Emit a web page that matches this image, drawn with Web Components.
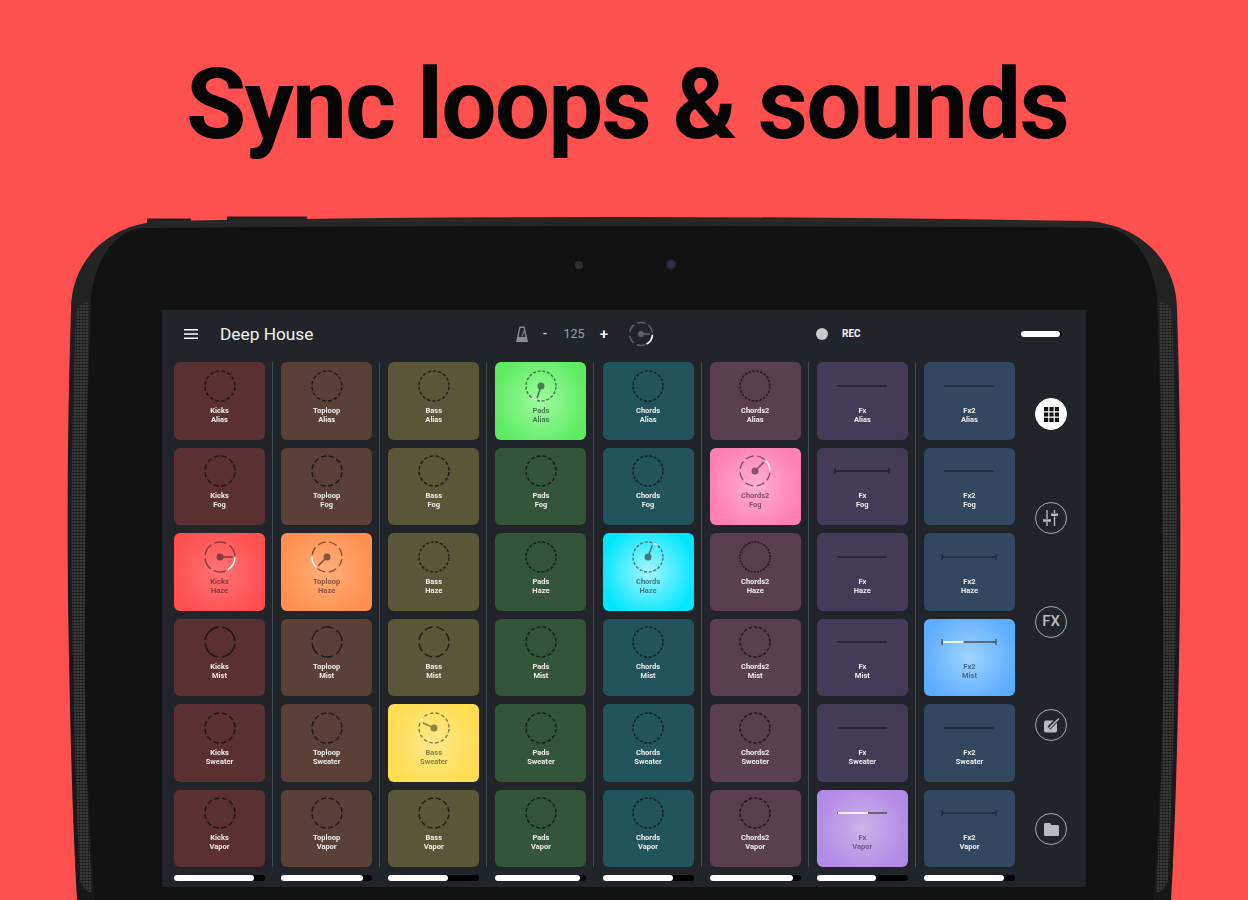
<!DOCTYPE html>
<html>
<head>
<meta charset="utf-8">
<title>Sync loops & sounds</title>
<style>
  html, body { margin: 0; padding: 0; background: #ff5050; }
  body { width: 1248px; height: 900px; overflow: hidden; font-family: Roboto, "Liberation Sans", sans-serif; }
</style>
</head>
<body>
<promo-page>
  <promo-headline>Sync loops &amp; sounds</promo-headline>
  <tablet-frame>
    <deck-screen></deck-screen>
  </tablet-frame>
</promo-page>

<script>
// data for the 8 columns, top to bottom
const ROWS = ['Alias', 'Fog', 'Haze', 'Mist', 'Sweater', 'Vapor']
const COLUMNS = [
  { name: 'Kicks', bg: '#5a3032', bar: 88, segs: [16, 12, 6, 4, 12, 12] },
  { name: 'Toploop', bg: '#5b4038', bar: 90, segs: [16, 12, 8, 6, 12, 12] },
  { name: 'Bass', bg: '#5a5638', bar: 66, segs: [18, 16, 20, 8, 16, 12] },
  { name: 'Pads', bg: '#33553a', bar: 93, segs: [20, 16, 20, 16, 16, 16] },
  { name: 'Chords', bg: '#22545e', bar: 77, segs: [20, 20, 20, 20, 20, 20] },
  { name: 'Chords2', bg: '#5a3f4c', bar: 91, segs: [24, 8, 30, 18, 18, 18] },
  { name: 'Fx', bg: '#443b58', bar: 65, line: true, ticks: [0, 1, 0, 0, 0, 0] },
  { name: 'Fx2', bg: '#324860', bar: 88, line: true, ticks: [0, 0, 1, 1, 0, 1] }
]
// col,row -> playing state
const ACTIVE = {
  '0,2': { from: '#ff7373', to: '#ff4f4f', ink: '#8c3a3c', angle: 90, sweep: 58 },
  '1,2': { from: '#ffb077', to: '#ff8f50', ink: '#8a5238', angle: 225, sweep: 45 },
  '2,4': { from: '#ffe98a', to: '#ffdc50', ink: '#8c8040', angle: 295, sweep: 16 },
  '3,0': { from: '#a0fba0', to: '#5eeb62', ink: '#3f7f4a', angle: 198, sweep: 18 },
  '4,2': { from: '#a6f6ff', to: '#00e6ff', ink: '#3d7a85', angle: 20, sweep: 16 },
  '5,1': { from: '#ffb0cf', to: '#ff7fb0', ink: '#8a4f68', angle: 45, sweep: 42 },
  '6,5': { from: '#cdb2eb', to: '#b189e6', ink: '#6f5a8e', fill: 62 },
  '7,3': { from: '#a0d4ff', to: '#5cacff', ink: '#466a8e', fill: 40 }
}

function arcPoint (cx, cy, r, deg) {
  const a = (deg - 90) * Math.PI / 180
  return [cx + r * Math.cos(a), cy + r * Math.sin(a)]
}

function dialSvg (size, r, segs, ink, angle, sweep, dot) {
  const c = size / 2
  const circ = 2 * Math.PI * r
  const seg = circ / segs
  // few segments = wider gaps, like the reference dials
  const gap = segs <= 8 ? 3.6 : Math.min(2.6, seg * .36)
  let dom = `<svg width="${size}" height="${size}" viewBox="0 0 ${size} ${size}" fill="none">
    <circle cx="${c}" cy="${c}" r="${r}" stroke="${ink}" stroke-width="1.4" stroke-dasharray="${seg - gap} ${gap}" stroke-dashoffset="${-gap / 2}"/>`
  if (angle !== undefined) {
    const [nx, ny] = arcPoint(c, c, r - 2.5, angle)
    const [ax, ay] = arcPoint(c, c, r, angle + 3)
    const [bx, by] = arcPoint(c, c, r, angle + sweep)
    dom += `<line x1="${c}" y1="${c}" x2="${nx}" y2="${ny}" stroke="${ink}" stroke-width="1.6"/>
      <circle cx="${c}" cy="${c}" r="${dot}" fill="${ink}"/>
      <path d="M${ax} ${ay}A${r} ${r} 0 0 1 ${bx} ${by}" stroke="#fff" stroke-width="1.6"/>`
  }
  return dom + '</svg>'
}

function lineSvg (ink, ticks, fill) {
  const x1 = ticks ? 1 : 3
  const x2 = ticks ? 55 : 53
  const white = fill !== undefined ? x1 + (x2 - x1) * fill / 100 : 0
  let dom = `<svg width="56" height="8" viewBox="0 0 56 8" fill="none">
    <line x1="${x1}" y1="4" x2="${x2}" y2="4" stroke="${ink}" stroke-width="1.4"/>`
  if (ticks) dom += `<path d="M1 1v6M55 1v6" stroke="${ink}" stroke-width="1.3"/>`
  if (white) dom += `<line x1="${x1 + 1}" y1="4" x2="${white}" y2="4" stroke="#fff" stroke-width="1.8"/>`
  return dom + '</svg>'
}

class PromoPage extends HTMLElement {
  constructor () {
    super()
    this.attachShadow({ mode: 'open' }).innerHTML = `<style>
      :host { display: flex; flex-direction: column; width: 1248px; height: 900px; background: #ff5050; overflow: hidden; }
    </style><slot></slot>`
  }
}

class PromoHeadline extends HTMLElement {
  constructor () {
    super()
    this.attachShadow({ mode: 'open' }).innerHTML = `<style>
      :host { display: block; height: 215px; flex: none; box-sizing: border-box; padding: 45px 0 0 6px; text-align: center;
        font: 700 98px/120px Roboto, "Liberation Sans", sans-serif; color: #050505; letter-spacing: -1.8px; white-space: nowrap; }
    </style><slot></slot>`
  }
}

class TabletFrame extends HTMLElement {
  constructor () {
    super()
    const grille = 'M1159 302Q1171 303 1172 315Q1178 460 1176 600Q1174 760 1168 880Q1166 890 1156 893Q1165 740 1163 600Q1162 440 1159 302Z'
    const grilleL = 'M89 302Q77 303 76 315Q70 460 72 600Q74 760 80 880Q82 890 92 893Q83 740 85 600Q86 440 89 302Z'
    this.attachShadow({ mode: 'open' }).innerHTML = `<style>
      :host { display: block; position: relative; width: 1248px; height: 685px; flex: none; box-sizing: border-box; padding: 95px 0 0 162px; }
      svg.body { position: absolute; left: 0; top: 0; }
      ::slotted(*) { position: relative; }
    </style>
    <svg class="body" width="1248" height="685" viewBox="0 215 1248 685">
      <defs>
        <pattern id="holes" width="3" height="3" patternUnits="userSpaceOnUse">
          <rect width="3" height="3" fill="#3c3c3c"/>
          <circle cx="1.5" cy="1.5" r="1.1" fill="#131313"/>
        </pattern>
        <linearGradient id="rim" x1="0" y1="0" x2="0" y2="1">
          <stop offset="0" stop-color="#262626"/><stop offset=".25" stop-color="#1c1c1c"/><stop offset="1" stop-color="#181818"/>
        </linearGradient>
      </defs>
      <rect x="147" y="218.500" width="44" height="5" rx="1" fill="#202020"/>
      <rect x="227" y="216.500" width="80" height="6" rx="1" fill="#202020"/>
      <path d="M160 221Q400 217 624 217Q848 217 1088 221C1140 225 1177 260 1177 310C1180 400 1181 500 1180 600Q1177 800 1171 900L77 900Q71 800 68 600C67 500 68 400 71 310C71 260 108 225 160 221Z" fill="url(#rim)"/>
      <path d="M624 220Q848 220 1088 223M624 220Q400 220 160 223" stroke="#2e2e2e" fill="none"/>
      <path d="M140 228Q400 226 624 226Q848 226 1108 228C1135 232 1153 262 1157 297Q1162 440 1163 600Q1165 740 1153 900L95 900Q83 740 85 600Q86 440 91 297C95 262 113 232 140 228Z" fill="#121212"/>
      <path d="${grille}" fill="url(#holes)"/>
      <path d="${grilleL}" fill="url(#holes)"/>
      <circle cx="579" cy="265" r="4" fill="#303030"/>
      <circle cx="671" cy="264.500" r="5" fill="#272930"/>
      <circle cx="671" cy="264.500" r="2.500" fill="#2b2f55"/>
    </svg>
    <slot></slot>`
  }
}

class TopBar extends HTMLElement {
  constructor () {
    super()
    this.attachShadow({ mode: 'open' }).innerHTML = `<style>
      :host { display: flex; align-items: center; height: 52px; box-sizing: border-box; padding-bottom: 5px; color: #fff; font-family: Roboto, "Liberation Sans", sans-serif; }
      .left { display: flex; align-items: center; width: 354px; box-sizing: border-box; padding-left: 22px; flex: none; }
      .left svg { margin-right: 22px; }
      .title { font-size: 17.300px; color: #f2f2f2; }
      .tempo { display: flex; align-items: center; width: 300px; flex: none; }
      .tempo span { display: block; text-align: center; }
      .minus { width: 10px; margin-left: 12px; font-size: 13px; font-weight: 500; color: #ddd; }
      .bpm { width: 30px; margin-left: 9px; font-size: 12.500px; color: #9b9fa3; }
      .plus { width: 10px; margin-left: 10px; font-size: 15px; font-weight: 500; color: #fff; }
      .tempo svg:last-child { margin-left: 19px; }
      .rec { display: flex; align-items: center; }
      .dot { width: 12px; height: 12px; border-radius: 50%; background: #c9c9c9; }
      .rec span { margin-left: 14px; font-size: 10px; font-weight: 700; color: #f4f4f4; }
      .pill { margin-left: auto; margin-right: 24px; width: 41px; height: 6px; border-radius: 3px; background: #000; }
      .pill i { display: block; width: 39px; height: 6px; border-radius: 3px; background: #fff; }
    </style>
    <div class="left">
      <svg width="14" height="10" viewBox="0 0 14 10"><path d="M0 .75h14M0 5h14M0 9.250h14" stroke="#fff" stroke-width="1.500"/></svg>
      <div class="title">Deep House</div>
    </div>
    <div class="tempo">
      <svg width="12" height="16" viewBox="0 0 12 16"><path d="M3.400 .5h5.200L12 16H0Z" fill="#8a8c8e"/><path d="M4.400 2h3.200l1.800 9H2.600Z" fill="#212529"/><path d="M6 10.500l2.500-7" stroke="#8a8c8e" stroke-width="1"/></svg>
      <span class="minus">-</span><span class="bpm">125</span><span class="plus">+</span>
      ${dialSvg(26, 11.5, 6, '#5f6265', 90, 62, 3)}
    </div>
    <div class="rec"><div class="dot"></div><span>REC</span></div>
    <div class="pill"><i></i></div>`
  }
}

class SoundPad extends HTMLElement {
  constructor () {
    super()
    this.attachShadow({ mode: 'open' })
  }
  connectedCallback () {
    const d = this.spec
    const on = d.active
    const graphic = d.line
      ? lineSvg(on ? '#4c5057' : (d.ink || '#1f2a3a'), d.ticks, on ? on.fill : undefined)
      : dialSvg(32, 15, d.segs, on ? on.ink : 'rgba(15,15,20,.8)', on ? on.angle : undefined, on ? on.sweep : 0, 3.500)
    this.shadowRoot.innerHTML = `<style>
      :host { display: block; width: 91px; height: 77.500px; flex: none; border-radius: 6px; box-sizing: border-box; padding-top: 7.500px;
        background: ${on ? `radial-gradient(circle at 50% 50%, ${on.from}, ${on.to} 80%)` : d.bg};
        font: 700 7.500px/9.200px Roboto, "Liberation Sans", sans-serif; color: ${on ? on.ink : '#f1eeee'}; text-align: center; }
      .g { height: 32px; display: flex; align-items: center; justify-content: center; }
      .t { margin-top: 4px; filter: blur(.2px); }
    </style>
    <div class="g">${graphic}</div>
    <div class="t"><slot></slot></div>`
  }
}

class DeckColumn extends HTMLElement {
  constructor () {
    super()
    this.attachShadow({ mode: 'open' })
  }
  connectedCallback () {
    const last = this.hasAttribute('last')
    const bar = this.getAttribute('bar')
    this.shadowRoot.innerHTML = `<style>
      :host { display: flex; flex-direction: column; width: 99px; margin-right: 8.150px; flex: none; }
      .stack { display: flex; flex-direction: column; gap: 8px; height: 505px; box-sizing: border-box; width: 99px; padding-right: 7px;
        ${last ? '' : 'border-right: 1px solid #3f4e54;'} }
      .track { width: 91px; height: 6px; margin-top: 7.500px; border-radius: 3px; background: #000; }
      .fill { height: 6px; width: ${bar}%; border-radius: 3px; background: #fff; }
    </style>
    <div class="stack"><slot></slot></div>
    <div class="track"><div class="fill"></div></div>`
  }
}

class RoundButton extends HTMLElement {
  constructor () {
    super()
    this.attachShadow({ mode: 'open' }).innerHTML = `<style>
      :host { display: flex; align-items: center; justify-content: center; width: 32px; height: 32px; box-sizing: border-box; border-radius: 50%;
        border: 1px solid #a8aaac; color: #b9bbbd; font: 500 15px/1 Roboto, "Liberation Sans", sans-serif; }
      :host([on]) { background: #fff; border-color: #fff; color: #111; }
    </style><slot></slot>`
  }
}

class DeckScreen extends HTMLElement {
  constructor () {
    super()
    this.attachShadow({ mode: 'open' }).innerHTML = `<style>
      :host { display: block; width: 924px; height: 577px; background: #212529; }
      .main { display: flex; }
      .deck { display: flex; padding-left: 12px; }
      .rail { width: 40px; height: 483px; box-sizing: border-box; padding-top: 36px; display: flex; flex-direction: column; justify-content: space-between; align-items: center; flex: none; }
    </style>
    <top-bar></top-bar>
    <div class="main">
      <div class="deck"></div>
      <div class="rail">
        <round-button on><svg width="15" height="15" viewBox="0 0 15 15" fill="#111"><path d="M0 0h4.200v4.200H0zM5.400 0h4.200v4.200H5.400zM10.800 0H15v4.200h-4.200zM0 5.400h4.200v4.200H0zM5.400 5.400h4.200v4.200H5.400zM10.800 5.400H15v4.200h-4.200zM0 10.800h4.200V15H0zM5.400 10.800h4.200V15H5.400zM10.800 10.800H15V15h-4.200z"/></svg></round-button>
        <round-button><svg width="16" height="16" viewBox="0 0 16 16" fill="#b9bbbd"><path d="M3.300 0h1.400v9H3.300zM3.300 12h1.400v4H3.300zM0 9.300h8v2.400H0zM10.800 0h1.400v3h-1.400zM10.800 6.500h1.400V16h-1.400zM8 3.500h7v2.400H8z"/></svg></round-button>
        <round-button>FX</round-button>
        <round-button><svg width="17" height="17" viewBox="0 0 17 17" fill="none"><rect x="1" y="3.500" width="13" height="12" rx="2" fill="#b9bbbd"/><path d="M6 11L16 1" stroke="#212529" stroke-width="4"/><path d="M7 10.500L15.500 2" stroke="#b9bbbd" stroke-width="1.600" stroke-linecap="round"/></svg></round-button>
        <round-button><svg width="15" height="13" viewBox="0 0 15 13" fill="#b9bbbd"><path d="M1.200 0H6l1.500 2h6.300A1.200 1.200 0 0 1 15 3.200v8.600a1.200 1.200 0 0 1-1.200 1.200H1.200A1.200 1.200 0 0 1 0 11.800V1.200A1.200 1.200 0 0 1 1.200 0Z"/></svg></round-button>
      </div>
    </div>`
    const deck = this.shadowRoot.querySelector('.deck')
    COLUMNS.forEach((col, c) => {
      const column = document.createElement('deck-column')
      column.setAttribute('bar', col.bar)
      if (c === COLUMNS.length - 1) column.setAttribute('last', '')
      ROWS.forEach((row, r) => {
        const pad = document.createElement('sound-pad')
        pad.spec = {
          bg: col.bg,
          line: col.line,
          ticks: col.line ? col.ticks[r] : 0,
          segs: col.segs ? col.segs[r] : 0,
          ink: c === 6 ? '#211d33' : '#1a2b40',
          active: ACTIVE[c + ',' + r]
        }
        pad.innerHTML = `${col.name}<br>${row}`
        column.appendChild(pad)
      })
      deck.appendChild(column)
    })
  }
}

customElements.define('promo-page', PromoPage)
customElements.define('promo-headline', PromoHeadline)
customElements.define('tablet-frame', TabletFrame)
customElements.define('top-bar', TopBar)
customElements.define('sound-pad', SoundPad)
customElements.define('deck-column', DeckColumn)
customElements.define('round-button', RoundButton)
customElements.define('deck-screen', DeckScreen)
</script>
</body>
</html>
